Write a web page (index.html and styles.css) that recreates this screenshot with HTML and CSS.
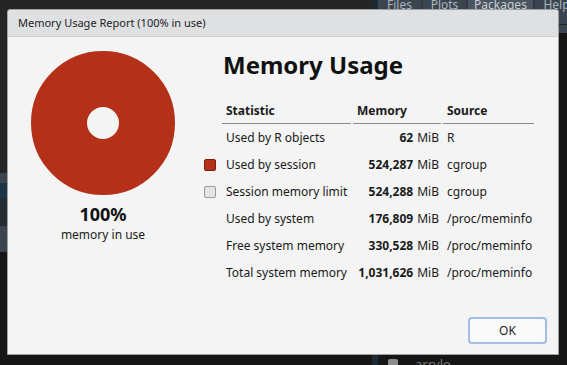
FILE: index.html
```html
<!DOCTYPE html>
<html lang="en">
  <head>
    <meta charset="UTF-8" />
    <title>Memory Usage Report</title>
    <link rel="stylesheet" href="styles.css">
  </head>
  <body>
    <div id="ide">
      <div class="left-pane">
        <div class="left-top"></div>
        <div class="left-stripes">
          <div class="stripe s1"></div>
          <div class="stripe s2"></div>
          <div class="stripe s3"></div>
          <div class="stripe s4"></div>
        </div>
      </div>
      <div class="right-pane">
        <div class="tabbar">
          <span class="tab">Files</span>
          <span class="tab">Plots</span>
          <span class="tab active">Packages</span>
          <span class="tab">Help</span>
        </div>
        <div class="tabbar-edge"></div>
        <div class="pkg-list">
          <div class="pkg-row">
            <span class="pkg-check"></span>
            <span class="pkg-name">arrylo</span>
          </div>
        </div>
      </div>
    </div>

    <!-- dialog sits over the IDE -->
    <div id="dialog">
      <div class="titlebar">Memory Usage Report (100% in use)</div>
      <div class="dialog-body">
        <div class="summary">
          <svg class="donut" width="144" height="144" viewBox="0 0 144 144">
            <circle cx="72" cy="72" r="44" fill="none" stroke="#b43019" stroke-width="56" />
          </svg>
          <div class="pct">100%</div>
          <div class="pct-label">memory in use</div>
        </div>
        <div class="report">
          <h1 class="heading">Memory Usage</h1>
          <div class="stats">
            <div class="cell"></div>
            <div class="cell head">Statistic</div>
            <div class="cell head">Memory</div>
            <div class="cell head">Source</div>

            <div class="cell"></div>
            <div class="cell">Used by R objects</div>
            <div class="cell num"><b>62</b> MiB</div>
            <div class="cell">R</div>

            <div class="cell"><span class="swatch used"></span></div>
            <div class="cell">Used by session</div>
            <div class="cell num"><b>524,287</b> MiB</div>
            <div class="cell">cgroup</div>

            <div class="cell"><span class="swatch limit"></span></div>
            <div class="cell">Session memory limit</div>
            <div class="cell num"><b>524,288</b> MiB</div>
            <div class="cell">cgroup</div>

            <div class="cell"></div>
            <div class="cell">Used by system</div>
            <div class="cell num"><b>176,809</b> MiB</div>
            <div class="cell">/proc/meminfo</div>

            <div class="cell"></div>
            <div class="cell">Free system memory</div>
            <div class="cell num"><b>330,528</b> MiB</div>
            <div class="cell">/proc/meminfo</div>

            <div class="cell"></div>
            <div class="cell">Total system memory</div>
            <div class="cell num"><b>1,031,626</b> MiB</div>
            <div class="cell">/proc/meminfo</div>
          </div>
        </div>
      </div>
      <div class="buttons">
        <button class="ok">OK</button>
      </div>
    </div>
  </body>
</html>
```

FILE: styles.css
```css
body {
  margin: 0;
  width: 567px;
  height: 365px;
  overflow: hidden;
  background-color: #161616;
  font-family: "Noto Sans", "Open Sans", sans-serif;
  font-size: 12px;
  color: #1a1a1a;
}
#ide {
  display: flex;
  height: 365px;
}
.left-pane {
  width: 372px;
  flex-shrink: 0;
  display: flex;
  flex-direction: column;
}
.left-top {
  height: 173px;
  background-color: #252525;
}
.left-stripes {
  display: flex;
  flex-direction: column;
  width: 8px;
}
.stripe.s1 { height: 10px; background-color: #3a444e; }
.stripe.s2 { height: 15px; background-color: #1d3346; }
.stripe.s3 { height: 28px; background-color: #262c33; }
.stripe.s4 { height: 26px; background-color: #3a444e; }
.right-pane {
  flex: 1;
  min-width: 0;
  overflow: hidden;
  border-left: 6px solid #1b2835;
  display: flex;
  flex-direction: column;
}
.tabbar {
  display: flex;
  gap: 2px;
  height: 24px;
  background-color: #2f3a44;
  align-items: flex-start;
}
.tab {
  flex-shrink: 0;
  width: 43px;
  text-align: center;
  line-height: 9px;
  height: 24px;
  color: #aab4bd;
  background-color: #3a4550;
  font-size: 12px;
}
.tab.active {
  width: 65px;
  background-color: #4a5560;
  color: #c4ccd3;
}
.tabbar-edge {
  height: 8px;
  background-color: #3a4550;
  border-top: 1px solid #222;
}
.pkg-list {
  flex: 1;
  display: flex;
  flex-direction: column;
  justify-content: flex-end;
}
.pkg-row {
  display: flex;
  align-items: center;
  gap: 17px;
  padding-left: 10px;
  height: 20px;
  margin-bottom: -9px;
}
.pkg-check {
  width: 10px;
  height: 10px;
  border-radius: 2px;
  background-color: #8c8c8c;
}
.pkg-name {
  color: #777;
  font-size: 13px;
}

#dialog {
  position: absolute;
  left: 7px;
  top: 9px;
  width: 550px;
  height: 344px;
  border: 1px solid #a0a0a0;
  border-radius: 3px 3px 0 0;
  background-color: #f3f4f3;
  display: flex;
  flex-direction: column;
}
.titlebar {
  height: 26px;
  line-height: 26px;
  padding-left: 10px;
  background-color: #dfe0e2;
  border-bottom: 1px solid #d0d1d3;
  border-radius: 3px 3px 0 0;
  font-size: 11px;
  color: #222;
}
.dialog-body {
  flex: 1;
  display: flex;
}
.summary {
  width: 190px;
  display: flex;
  flex-direction: column;
  align-items: center;
  padding-top: 14px;
}
.donut {
  display: block;
}
.pct {
  margin-top: 7px;
  font-size: 18px;
  font-weight: bold;
  line-height: 24px;
  color: #111;
}
.pct-label {
  font-size: 12px;
  line-height: 17px;
}
.report {
  flex: 1;
}
.heading {
  margin: 12px 0 18px 25px;
  font-size: 24px;
  line-height: 32px;
  font-weight: bold;
  color: #111;
}
.stats {
  display: grid;
  grid-template-columns: 24px 131px 90px 93px;
  grid-auto-rows: 27px;
  grid-template-rows: 25px;
}
.cell {
  display: flex;
  align-items: center;
  padding-left: 4px;
  white-space: nowrap;
}
.cell.head {
  font-weight: bold;
  border-bottom: 1px solid #8a8a8a;
  margin-right: 2px;
  padding-bottom: 2px;
}
.cell.num {
  justify-content: flex-end;
  padding: 0 4px 0 0;
  gap: 4px;
}
.swatch {
  width: 12px;
  height: 12px;
  margin-left: 2px;
  box-sizing: border-box;
  border-radius: 2px;
}
.swatch.used {
  background-color: #b43019;
  border: 1px solid #7d2010;
}
.swatch.limit {
  background-color: #e4e4e4;
  border: 1px solid #9c9c9c;
}
.buttons {
  display: flex;
  justify-content: flex-end;
  padding: 0 11px 10px 0;
}
.ok {
  width: 79px;
  height: 27px;
  border: 2px solid #a5bde3;
  border-radius: 4px;
  background-color: #fafafa;
  font-family: "Noto Sans", "Open Sans", sans-serif;
  font-size: 12px;
  color: #222;
}
```
